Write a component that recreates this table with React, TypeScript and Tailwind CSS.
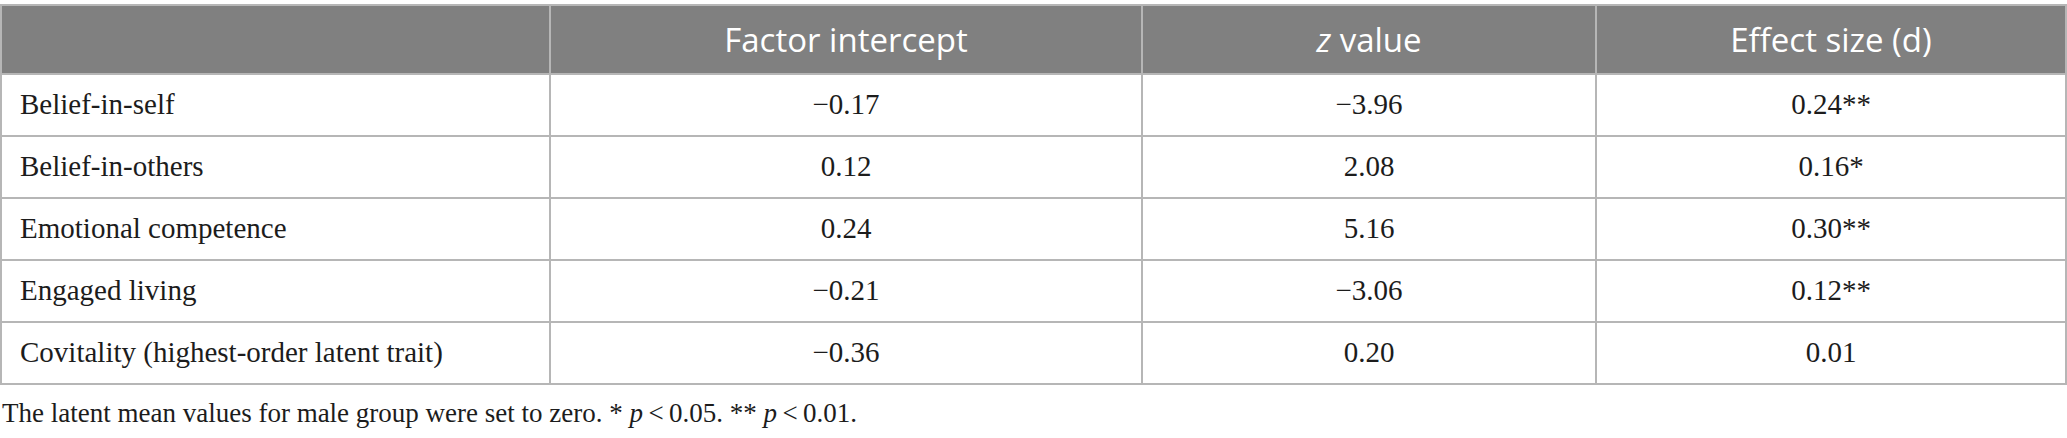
const rows = [
  { label: "Belief-in-self", intercept: "\u22120.17", z: "\u22123.96", d: "0.24**" },
  { label: "Belief-in-others", intercept: "0.12", z: "2.08", d: "0.16*" },
  { label: "Emotional competence", intercept: "0.24", z: "5.16", d: "0.30**" },
  { label: "Engaged living", intercept: "\u22120.21", z: "\u22123.06", d: "0.12**" },
  { label: "Covitality (highest-order latent trait)", intercept: "\u22120.36", z: "0.20", d: "0.01" },
];

const serif = "font-['Liberation_Serif','Times_New_Roman',serif]";
const sans = "font-['Open_Sans','Noto_Sans',sans-serif]";

export default function App() {
  return (
    <div className="w-[2067px] bg-white text-[#1c1c1c]">
      {/* Table */}
      <div className="mt-[4px] border-2 border-[#b6b6b6]">
        <div className={`grid grid-cols-[547px_592px_454px_1fr] h-[67px] bg-[#808080] text-white text-[33px] ${sans}`}>
          <div />
          <div className="flex items-center justify-center border-l-2 border-[#b6b6b6]">Factor intercept</div>
          <div className="flex items-center justify-center border-l-2 border-[#b6b6b6]">
            <span className="italic">z</span>&nbsp;value
          </div>
          <div className="flex items-center justify-center border-l-2 border-[#b6b6b6]">Effect size (d)</div>
        </div>
        {rows.map((row) => (
          <div
            key={row.label}
            className={`grid grid-cols-[547px_592px_454px_1fr] h-[62px] border-t-2 border-[#b6b6b6] text-[29px] ${serif}`}
          >
            <div className="flex items-center pl-[18px]">{row.label}</div>
            <div className="flex items-center justify-center border-l-2 border-[#b6b6b6]">{row.intercept}</div>
            <div className="flex items-center justify-center border-l-2 border-[#b6b6b6]">{row.z}</div>
            <div className="flex items-center justify-center border-l-2 border-[#b6b6b6]">{row.d}</div>
          </div>
        ))}
      </div>

      {/* Footnote */}
      <p className={`mt-[12px] pl-[2px] text-[27px] leading-[32px] ${serif}`}>
        The latent mean values for male group were set to zero. * <span className="italic">p</span>
        {"\u2009<\u20090.05. ** "}
        <span className="italic">p</span>
        {"\u2009<\u20090.01."}
      </p>
    </div>
  );
}
